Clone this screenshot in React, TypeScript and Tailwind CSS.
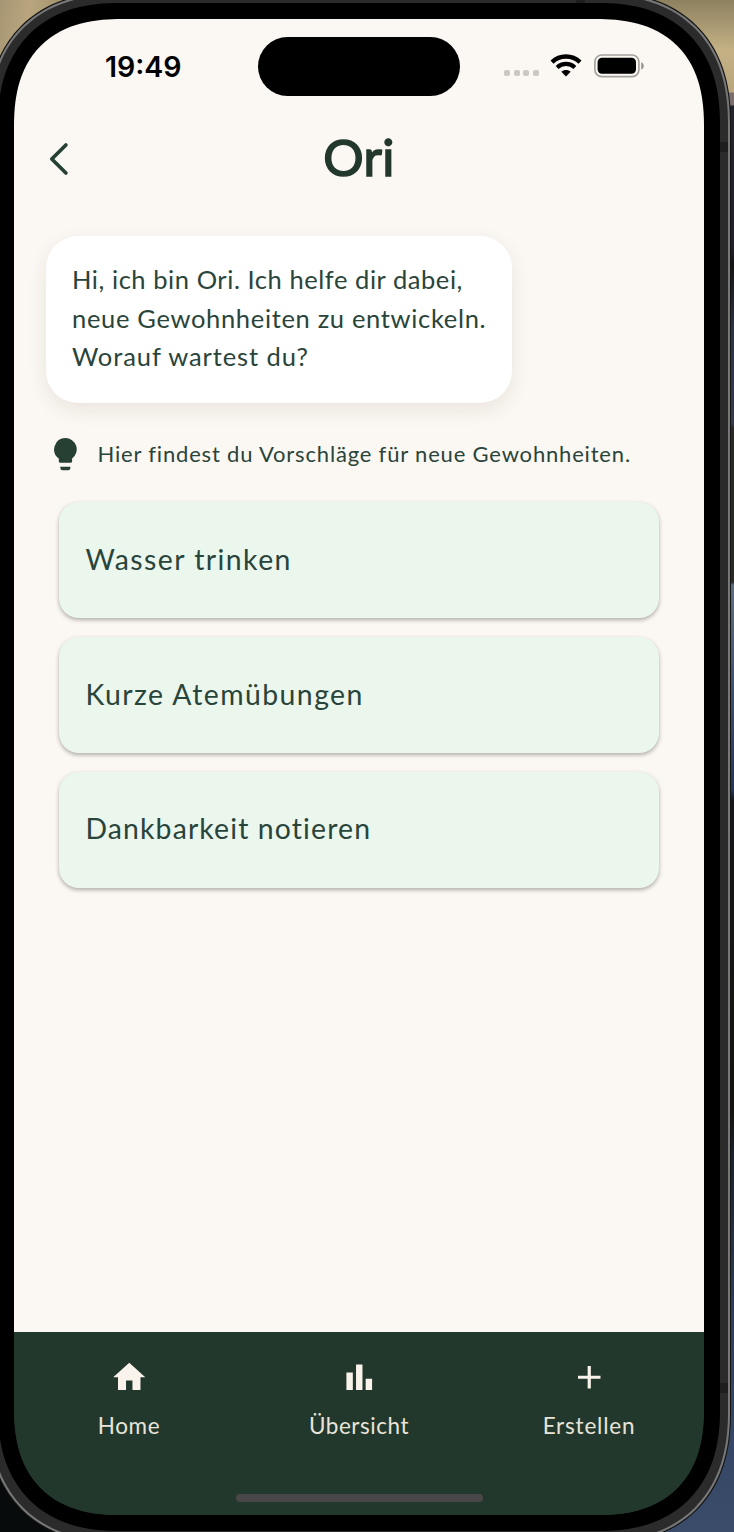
import React from "react";
import { MdAdd, MdBarChart, MdHome } from "react-icons/md";

const suggestions = [
  { label: "Wasser trinken", spacing: "tracking-[1.45px]" },
  { label: "Kurze Atemübungen", spacing: "tracking-[1.45px]" },
  { label: "Dankbarkeit notieren", spacing: "tracking-[1.13px]" },
];

const tabs = [
  { label: "Home", Icon: MdHome, spacing: "tracking-[0.6px]" },
  { label: "Übersicht", Icon: MdBarChart, spacing: "tracking-[0.55px]" },
  { label: "Erstellen", Icon: MdAdd, spacing: "tracking-[0.8px]" },
];

function StatusBar() {
  return (
    <div className="flex h-[95px] shrink-0 items-center">
      <div className="flex w-[244px] justify-start pt-[2px] pl-[91px] font-['Inter'] text-[28.5px] leading-none font-semibold text-black">
        19:49
      </div>
      <div className="h-[59px] w-[202px] rounded-full bg-black" />
      <div className="flex items-center pl-[44px]">
        <div className="mt-[13px] flex gap-[3.7px]">
          {[0, 1, 2, 3].map((dot) => (
            <span key={dot} className="size-[6px] rounded-[2px] bg-[#cbc7c3]" />
          ))}
        </div>
        <svg className="-mt-[2px] ml-[11px] h-[23px] w-[32px]" viewBox="0 0 32 23" fill="none">
          <path d="M2 8.1C9.8 .6 22.2 .6 30 8.1" stroke="#000" strokeWidth="4.3" />
          <path d="M7.1 13.4c5-4.7 12.8-4.7 17.8 0" stroke="#000" strokeWidth="4.1" />
          <path d="M16 22.5l-4.7-4.7c2.6-2.4 6.8-2.4 9.4 0z" fill="#000" />
        </svg>
        <svg className="-mt-[2px] ml-[12px] h-[24px] w-[51px]" viewBox="0 0 51 24">
          <rect x=".9" y="1" width="44" height="21.6" rx="6.8" fill="none" stroke="#a5a19e" strokeWidth="1.7" />
          <rect x="3.6" y="3.7" width="38.4" height="16" rx="4.4" fill="#000" />
          <path d="M47.2 8.2c3.4 1.2 3.4 6.2 0 7.4z" fill="#98938f" />
        </svg>
      </div>
    </div>
  );
}

function Header() {
  return (
    <header className="grid h-[89px] shrink-0 grid-cols-[80px_1fr_80px] items-center">
      <svg className="ml-[34px] h-[34px] w-[22px]" viewBox="0 0 22 34" fill="none">
        <path d="M17.9 3L3.8 17L17.9 31" stroke="#264034" strokeWidth="3.7" strokeLinecap="round" strokeLinejoin="round" />
      </svg>
      <h1 className="pb-[3px] text-center text-[50.5px] leading-none font-normal tracking-[0.4px] text-[#23382c] [-webkit-text-stroke:1.6px_#23382c]">
        Ori
      </h1>
    </header>
  );
}

function Bubble() {
  return (
    <div className="mt-[33px] ml-[32px] h-[167px] w-[466px] shrink-0 rounded-[32px] bg-white pt-[24px] pl-[26px] text-[25.5px] leading-[38.5px] whitespace-nowrap text-[#29443a] shadow-[0_7px_20px_rgba(60,40,20,0.09)]">
      <p className="tracking-[0.56px]">Hi, ich bin Ori. Ich helfe dir dabei,</p>
      <p className="tracking-[0.67px]">neue Gewohnheiten zu entwickeln.</p>
      <p className="tracking-[0.9px]">Worauf wartest du?</p>
    </div>
  );
}

function Hint() {
  return (
    <div className="mt-[35px] ml-[40px] flex h-[33px] shrink-0 items-center">
      <svg className="h-[33px] w-[23px]" viewBox="0 0 23 33" fill="#264034">
        <path d="M11.35 0A11.35 11.35 0 0 1 18.1 20.5V23.2Q18.1 24.8 16.5 24.8H6.4Q4.8 24.8 4.8 23.2V20.5A11.35 11.35 0 0 1 11.35 0Z" />
        <path d="M6.3 28.7H16.4V30Q16.2 32.2 14.2 32.2H8.5Q6.5 32.2 6.3 30Z" />
      </svg>
      <p className="ml-[20.5px] pb-[2px] text-[22px] leading-[33px] tracking-[0.82px] whitespace-nowrap text-[#29443a]">
        Hier findest du Vorschläge für neue Gewohnheiten.
      </p>
    </div>
  );
}

function Phone() {
  return (
    <div className="-mt-[7px] -ml-[12px] h-[1550px] w-[742px] shrink-0 rounded-[130px] bg-[#777777] p-[2px] shadow-[0_0_0_1px_#151515] [corner-shape:superellipse(1.2)]">
      <div className="relative h-full rounded-[128px] bg-[#2b2b2b] p-[8px] [corner-shape:superellipse(1.2)]">
        <span className="absolute top-0 left-[586px] h-[8px] w-[9px] bg-[#1e1e1e]" />
        <span className="absolute top-[147px] right-0 h-[10px] w-[8px] bg-[#1e1e1e]" />
        <span className="absolute top-[1388px] right-0 h-[10px] w-[8px] bg-[#1e1e1e]" />
        <div className="relative h-[1528px] rounded-[120px] bg-black p-[16px] [corner-shape:superellipse(1.2)]">
          <main className="flex h-[1496px] flex-col overflow-hidden rounded-[108px] bg-[linear-gradient(#fbf7f2_1313px,#23382c_1313px)] [corner-shape:superellipse(1.28)]">
            <StatusBar />
            <Header />
            <Bubble />
            <Hint />
            <div className="mt-[31px] ml-[45px] flex w-[600px] flex-col gap-[18.8px]">
              {suggestions.map(({ label, spacing }) => (
                <button
                  key={label}
                  className="flex h-[116px] items-center rounded-[20px] bg-[#ebf6ed] pb-[2px] pl-[26.5px] text-[28.4px] leading-none whitespace-nowrap text-[#29443a] shadow-[0_2px_4px_rgba(0,0,0,0.3)]"
                >
                  <span className={spacing}>{label}</span>
                </button>
              ))}
            </div>
            <nav className="mt-auto flex h-[183px] shrink-0 flex-col items-center bg-[#23382c]">
              <div className="grid w-full grid-cols-3">
                {tabs.map(({ label, Icon, spacing }) => (
                  <a key={label} className="flex flex-col items-center pt-[26px]">
                    <Icon className="size-[38.5px] text-[#faf3ec]" />
                    <span className={`mt-[14.5px] text-[22.5px] leading-[30px] text-[#e9e4da] ${spacing}`}>{label}</span>
                  </a>
                ))}
              </div>
              <div className="mt-auto mb-[13px] h-[8px] w-[247px] rounded-full bg-[#484848]" />
            </nav>
          </main>
        </div>
      </div>
    </div>
  );
}

export default function App() {
  return (
    <div className="flex h-[1532px] w-[734px] items-start overflow-hidden bg-[linear-gradient(100deg,#a79673_0px,#b8a57e_30px,transparent_90px),linear-gradient(180deg,#8d815f_0px,#c4b184_50px,#b9a67d_92px,#7b6f6b_93px,#7b6f6b_105px,#23242e_106px,#1e1f2b_250px,#141414_265px,#2b3347_330px,#343b50_424px,#2c2a27_428px,#2c2a27_582px,#5c6d82_585px,#22365a_790px,#15171b_800px,#15130c_1110px,#18202c_1150px,#2e405f_1320px,#3a4c6a_1532px)] bg-[size:90px_90px,734px_1532px] bg-no-repeat font-['Lato',sans-serif]">
      <div className="flex h-[1532px] w-[734px] items-start bg-[linear-gradient(#070b0c,#070b0c)] bg-[size:150px_1300px] bg-[position:0_232px] bg-no-repeat">
        <Phone />
      </div>
    </div>
  );
}
